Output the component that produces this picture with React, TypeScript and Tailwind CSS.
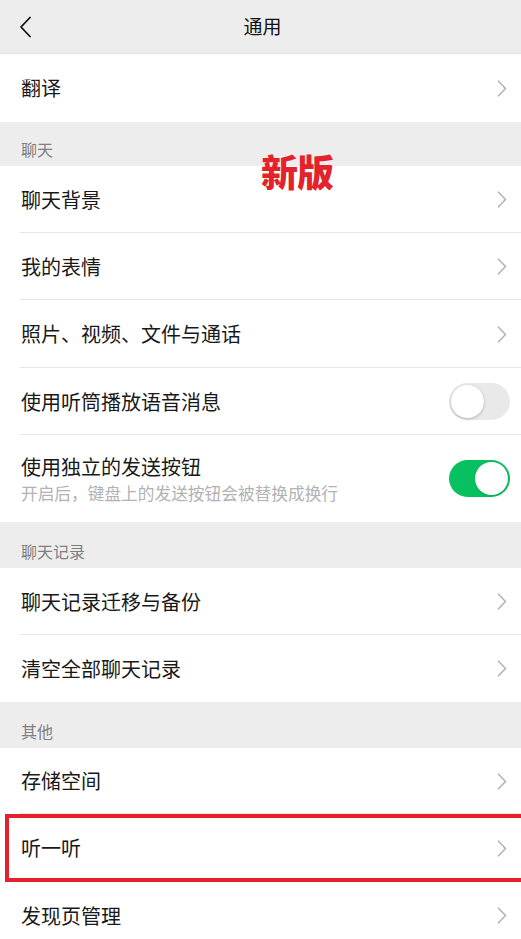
import React from "react";

const FONT = { fontFamily: '"Noto Sans CJK SC", "Noto Sans", sans-serif' };

function Chevron() {
  return (
    <svg width="10" height="17" viewBox="0 0 10 17" fill="none" className="shrink-0">
      <path d="M1.5 1.2 8.5 8.5 1.5 15.8" stroke="#b3b3b3" strokeWidth="1.6" strokeLinecap="round" strokeLinejoin="round" />
    </svg>
  );
}

function Toggle({ on }: { on: boolean }) {
  return on ? (
    <div className="w-[61px] h-[37px] rounded-full bg-[#07c160] p-[2px] flex justify-end shrink-0">
      <div className="w-[33px] h-[33px] rounded-full bg-white shadow-sm"></div>
    </div>
  ) : (
    <div className="w-[61px] h-[37px] rounded-full bg-[#e9e9ea] p-[2px] flex justify-start shrink-0">
      <div className="w-[33px] h-[33px] rounded-full bg-white shadow-[0_1px_3px_rgba(0,0,0,0.25)]"></div>
    </div>
  );
}

function Row({ label, last, h = "h-[67px]" }: { label: string; last?: boolean; h?: string }) {
  return (
    <div className={`relative ${h} flex items-center pl-[21px] pr-[14px] bg-white`}>
      <span className="flex-1 text-[20px] text-[#191919]">{label}</span>
      <Chevron />
      {!last && <div className="absolute left-[20px] right-0 bottom-0 h-px bg-[#e6e6e6]"></div>}
    </div>
  );
}

function Section({ title, h = "h-[46px]" }: { title: string; h?: string }) {
  return (
    <div className={`${h} bg-[#ededed] flex items-end pl-[21px] pb-[5px]`}>
      <span className="text-[16px] text-[#7f7f7f]">{title}</span>
    </div>
  );
}

export default function App() {
  return (
    <div className="w-[521px] h-[939px] overflow-hidden bg-[#ededed] relative" style={FONT}>
      {/* 顶部导航 */}
      <div className="h-[53px] flex items-center relative bg-[#ededed]">
        <div className="pl-[18px] w-[60px]">
          <svg width="16" height="22" viewBox="0 0 16 22" fill="none">
            <path d="M12 1.5 3 11l9 9.5" stroke="#111" strokeWidth="1.8" strokeLinecap="round" strokeLinejoin="round" />
          </svg>
        </div>
        <div className="flex-1 text-center text-[19px] text-[#111] pr-[60px] pl-[4px]">通用</div>
      </div>

      <div className="border-t border-[#e2e2e2]">
        <Row label="翻译" last h="h-[68px]" />
      </div>

      <Section title="聊天" h="h-[44px]" />
      <div className="relative">
        <Row label="聊天背景" />
        <Row label="我的表情" />
        <Row label="照片、视频、文件与通话" h="h-[68px]" />
        <div className="relative h-[67px] flex items-center pl-[21px] pr-[11px] bg-white">
          <span className="flex-1 text-[20px] text-[#191919]">使用听筒播放语音消息</span>
          <Toggle on={false} />
          <div className="absolute left-[20px] right-0 bottom-0 h-px bg-[#e6e6e6]"></div>
        </div>
        <div className="h-[87px] flex items-center pl-[21px] pr-[11px] bg-white">
          <div className="flex-1 flex flex-col">
            <span className="text-[20px] text-[#191919] leading-[28px]">使用独立的发送按钮</span>
            <span className="text-[16.7px] text-[#b2b2b2] leading-[24px]">开启后，键盘上的发送按钮会被替换成换行</span>
          </div>
          <Toggle on />
        </div>

        {/* 标注 */}
        <div className="absolute left-[261px] top-[-13px] text-[37px] font-black text-[#e3222b] leading-none tracking-[-1px]">
          新版
        </div>
      </div>

      <Section title="聊天记录" />
      <Row label="聊天记录迁移与备份" />
      <Row label="清空全部聊天记录" last />

      <Section title="其他" />
      <Row label="存储空间" h="h-[66px]" />
      <div className="relative">
        <Row label="听一听" h="h-[68px]" />
        <div className="absolute left-[5px] right-[-10px] top-0 bottom-0 border-[4.5px] border-[#e4212d] pointer-events-none"></div>
      </div>
      <Row label="发现页管理" last />
    </div>
  );
}
